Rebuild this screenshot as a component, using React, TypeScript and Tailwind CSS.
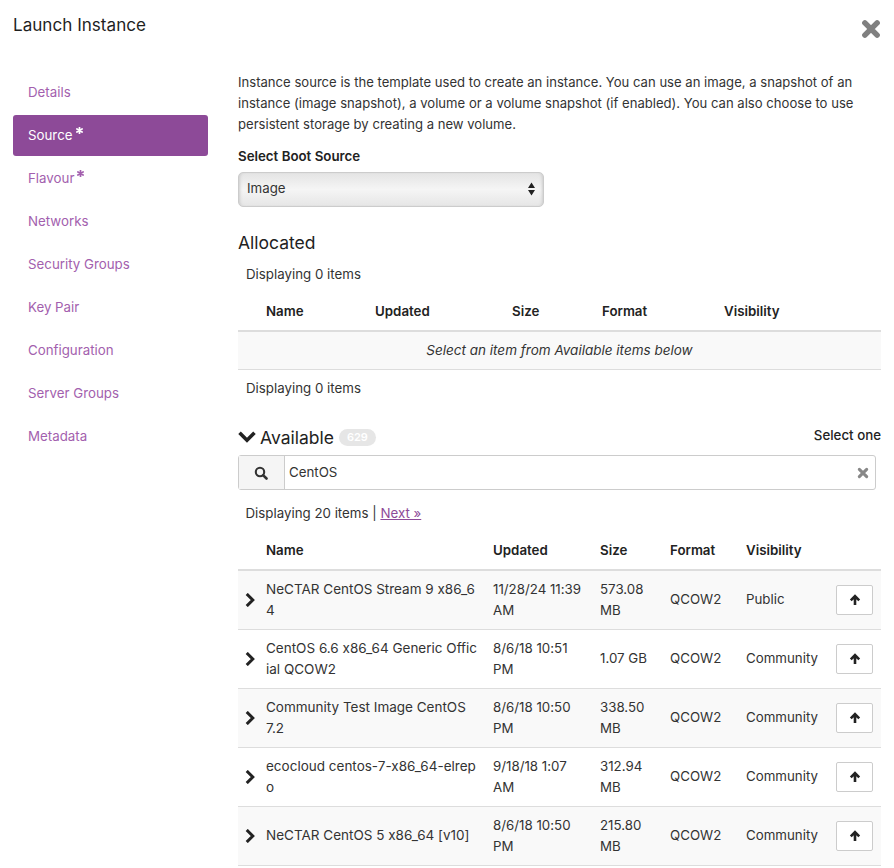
const nav = ["Details", "Source", "Flavour", "Networks", "Security Groups", "Key Pair", "Configuration", "Server Groups", "Metadata"];

const rows = [
  ["NeCTAR CentOS Stream 9 x86_6\n4", "11/28/24 11:39 AM", "573.08 MB", "Public"],
  ["CentOS 6.6 x86_64 Generic Offic\nial QCOW2", "8/6/18 10:51 PM", "1.07 GB", "Community"],
  ["Community Test Image CentOS\n7.2", "8/6/18 10:50 PM", "338.50 MB", "Community"],
  ["ecocloud centos-7-x86_64-elrep\no", "9/18/18 1:07 AM", "312.94 MB", "Community"],
  ["NeCTAR CentOS 5 x86_64 [v10]", "8/6/18 10:50 PM", "215.80 MB", "Community"],
];

function Cross({ size, sw, color, className }: { size: number; sw: number; color: string; className?: string }) {
  return (
    <svg width={size} height={size} viewBox="0 0 18 18" className={className}>
      <path d="M3.5 3.5L14.5 14.5M14.5 3.5L3.5 14.5" stroke={color} strokeWidth={sw} strokeLinecap="round" fill="none" />
    </svg>
  );
}

function Star({ className }: { className: string }) {
  return (
    <svg width="7" height="7" viewBox="0 0 14 14" className={className}>
      <path d="M7 1V13M1.8 4L12.2 10M12.2 4L1.8 10" stroke="currentColor" strokeWidth="3.4" strokeLinecap="round" fill="none" />
    </svg>
  );
}

export default function App() {
  return (
    <div className="w-[894px] h-[868px] overflow-hidden bg-white text-[#333] text-[13.3px] leading-[21px] font-['Inter','Noto_Sans',sans-serif] [font-feature-settings:'calt'_0]">
      <div className="h-[50px] pl-[13px] pr-[13px] flex justify-between">
        <h4 className="mt-[13px] text-[17.1px] leading-[24px] text-[#1f1f1f] font-normal">Launch Instance</h4>
        <Cross size={20} sw={5} color="#808080" className="mt-[19px]" />
      </div>
      <div className="flex pl-[13px]">
        <nav className="w-[195px] mt-[22px] shrink-0 flex flex-col">
          {nav.map((n) => {
            const active = n === "Source";
            const star = active || n === "Flavour";
            return (
              <div
                key={n}
                className={`h-[41px] mb-[2px] pl-[15px] flex items-center rounded-[3px] ${active ? "bg-[#8d4a98] text-white" : "text-[#a35fae]"}`}
              >
                {n}
                {star && <Star className={`ml-[3px] mb-[11px] ${active ? "text-white" : "text-[#a35fae]"}`} />}
              </div>
            );
          })}
        </nav>
        <main className="ml-[30px] w-[643px] pt-[22px]">
          <p className="text-[#333] w-[640px] text-[13.1px]">
            Instance source is the template used to create an instance. You can use an image, a snapshot of an instance (image snapshot), a volume or a volume snapshot (if enabled). You can also choose to use persistent storage by creating a new volume.
          </p>
          <div className="mt-[11px] font-semibold text-[#222]">Select Boot Source</div>
          <div className="mt-[5px] w-[306px] h-[35px] pl-[8px] pr-[8px] pb-[2px] flex items-center justify-between rounded-[5px] border border-[#ccc] bg-gradient-to-b from-[#e4e4e4] via-[#f5f5f5] to-[#e6e6e6] shadow-[inset_3px_0_3px_-2px_#ccc,inset_-3px_0_3px_-2px_#ccc]">
            <span>Image</span>
            <svg width="7" height="14" viewBox="0 0 7 14"><path d="M3.5 0.5L7 6H0z M0 8h7L3.5 13.5z" fill="#222" /></svg>
          </div>
          <h3 className="mt-[24px] text-[17.5px] leading-[24px] text-[#222] font-normal">Allocated</h3>
          <div className="mt-[9px] pl-[8px]">Displaying 0 items</div>
          <div className="mt-[10px] h-[37px] pb-[2px] flex items-center border-b-2 border-[#ddd] font-semibold text-[#222]">
            <span className="ml-[28px] w-[109px]">Name</span>
            <span className="w-[137px]">Updated</span>
            <span className="w-[90px]">Size</span>
            <span className="w-[122px]">Format</span>
            <span>Visibility</span>
          </div>
          <div className="h-[38px] flex items-center justify-center bg-[#f9f9f9] border-b border-[#ddd] italic text-[13.5px]">
            Select an item from Available items below
          </div>
          <div className="mt-[8px] pl-[8px]">Displaying 0 items</div>
          <div className="mt-[26px] flex items-center justify-between h-[24px]">
            <div className="flex items-center">
              <svg width="18" height="13" viewBox="0 0 18 13">
                <path d="M2.8 3L9 9.2L15.2 3" stroke="#222" strokeWidth="3.6" strokeLinecap="square" fill="none" />
              </svg>
              <span className="ml-[4px] text-[17.5px] text-[#222]">Available</span>
              <span className="ml-[5px] h-[17px] px-[8px] flex items-center rounded-[9px] bg-[#e6e6e6] text-white text-[11px] font-semibold">629</span>
            </div>
            <span className="font-medium text-[#222] mb-[4px]">Select one</span>
          </div>
          <div className="mt-[6px] w-[638px] h-[35px] flex rounded-[3px] border border-[#ccc]">
            <div className="w-[46px] flex items-center justify-center bg-[#f5f5f5] border-r border-[#ccc]">
              <svg width="14" height="14" viewBox="0 0 14 14" className="mr-[2px]">
                <circle cx="6" cy="6" r="4.2" stroke="#333" strokeWidth="2.1" fill="none" />
                <path d="M9.3 9.3L12.5 12.5" stroke="#333" strokeWidth="2.6" strokeLinecap="round" />
              </svg>
            </div>
            <div className="flex-1 flex items-center justify-between pl-[4px] pr-[6px]">
              <span>CentOS</span>
              <Cross size={12} sw={4.6} color="#888" />
            </div>
          </div>
          <div className="mt-[13px] pl-[7.5px]">
            Displaying 20 items | <span className="text-[#8d4a98] underline">Next »</span>
          </div>
          <table className="mt-[8px] w-[643px] table-fixed border-collapse">
            <colgroup>
              <col className="w-[20px]" />
              <col className="w-[227px]" />
              <col className="w-[107px]" />
              <col className="w-[70px]" />
              <col className="w-[76px]" />
              <col className="w-[90px]" />
              <col className="w-[53px]" />
            </colgroup>
            <thead>
              <tr className="h-[38px] border-b-2 border-[#ddd] font-semibold text-[#222] text-left">
                <th />
                <th className="px-[8px] font-semibold">Name</th>
                <th className="px-[8px] font-semibold">Updated</th>
                <th className="px-[8px] font-semibold">Size</th>
                <th className="px-[8px] font-semibold">Format</th>
                <th className="px-[8px] font-semibold">Visibility</th>
                <th />
              </tr>
            </thead>
            <tbody>
              {rows.map((r, i) => (
                <tr key={r[0]} className={`h-[59px] border-b border-[#ddd] ${i % 2 === 0 ? "bg-[#f9f9f9]" : "bg-white"}`}>
                  <td className="pl-[7px]">
                    <svg width="10" height="14" viewBox="0 0 10 14">
                      <path d="M2.8 2L7.8 7L2.8 12" stroke="#222" strokeWidth="3" strokeLinecap="square" fill="none" />
                    </svg>
                  </td>
                  <td className="pl-[8px] whitespace-pre-line text-[13.5px]">{r[0]}</td>
                  <td className="px-[8px]">{r[1]}</td>
                  <td className="px-[8px]">{r[2]}</td>
                  <td className="px-[8px]">QCOW2</td>
                  <td className="px-[8px]">{r[3]}</td>
                  <td>
                    <div className="ml-[8px] w-[37px] h-[30px] flex items-center justify-center bg-white border border-[#ccc] rounded-[2px]">
                      <svg width="12" height="12" viewBox="0 0 12 12">
                        <path d="M6 11V2.5M1.8 6.3L6 2L10.2 6.3" stroke="#222" strokeWidth="2.6" fill="none" />
                      </svg>
                    </div>
                  </td>
                </tr>
              ))}
            </tbody>
          </table>
        </main>
      </div>
    </div>
  );
}
